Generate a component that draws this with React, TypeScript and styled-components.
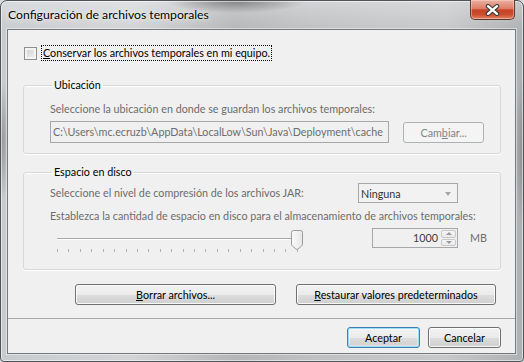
import React from "react";
import styled, { createGlobalStyle } from "styled-components";

const FONT = `Lato, "Noto Sans", "DejaVu Sans", sans-serif`;

const GlobalStyle = createGlobalStyle`
  html, body { margin: 0; padding: 0; background: #d9dbdd; }
  body { font-family: ${FONT}; font-size: 10.75px; }
  * { box-sizing: border-box; }
`;

const Window = styled.div`
  width: 524px;
  height: 362px;
  display: flex;
  flex-direction: column;
  padding: 0 7px 7px 6px;
  border: 1px solid #50545a;
  border-radius: 7px 7px 4px 4px;
  box-shadow: inset 0 0 0 1px rgba(255, 255, 255, 0.55);
  background:
    radial-gradient(ellipse 70px 12px at 235px 0px, rgba(70, 70, 70, 0.55), transparent),
    radial-gradient(ellipse 10px 60px at 0px 140px, rgba(90, 90, 90, 0.5), transparent),
    radial-gradient(ellipse 10px 80px at 524px 150px, rgba(90, 90, 90, 0.5), transparent),
    linear-gradient(180deg, rgba(255, 255, 255, 0.3), rgba(255, 255, 255, 0) 30px),
    linear-gradient(90deg, #c8cbce 0%, #d2d4d6 25%, #b4b6b8 45%, #bfc1c3 60%, #c6c8ca 85%, #aeb0b2 100%);
`;

const TitleBar = styled.div`
  height: 28px;
  display: flex;
  align-items: flex-start;
  justify-content: space-between;
`;

const Title = styled.div`
  margin: 6px 0 0 1px;
  font-size: 12.2px;
  line-height: 16px;
  color: #000;
  text-shadow: 0 0 6px rgba(255, 255, 255, 0.9), 0 0 2px rgba(255, 255, 255, 0.8);
`;

const CloseButton = styled.div`
  width: 45px;
  height: 20px;
  margin: -1px 1px 0 0;
  display: flex;
  align-items: center;
  justify-content: center;
  border: 1px solid #5c3a34;
  border-top: none;
  border-radius: 0 0 5px 5px;
  background: linear-gradient(#eab1a3 0%, #dd7d66 45%, #c84327 52%, #c94a2d 75%, #e58463 100%);
  box-shadow: inset 0 0 0 1px rgba(255, 220, 210, 0.45);
`;

const Client = styled.div`
  flex: 1;
  display: flex;
  flex-direction: column;
  background: #f0f0f0;
  border: 1px solid #75797d;
  box-shadow: 0 0 0 1px rgba(255, 255, 255, 0.45);
`;

const CheckRow = styled.div`
  margin: 15px 0 0 16px;
  height: 16px;
  display: flex;
  align-items: center;
  gap: 4px;
`;

const CheckBox = styled.span`
  width: 13px;
  height: 13px;
  border: 1px solid #8e8f8f;
  background: linear-gradient(135deg, #cfcfcf 0%, #f2f2f2 100%);
  box-shadow: inset 0 0 0 2px #f4f4f4;
`;

const FocusLabel = styled.span`
  border: 1px dotted #000;
  padding: 0 1px 0 1px;
  line-height: 14px;
  color: #000;
`;

const Group = styled.fieldset<{ $top: number; $pad: string }>`
  margin: ${(p) => p.$top}px 14px 0 15px;
  padding: ${(p) => p.$pad};
  border: 1px solid #d5d9dc;
  border-radius: 3px;
  box-shadow: 0 1px 0 #ffffff, inset 0 1px 0 #ffffff;
  min-width: 0;
`;

const Legend = styled.legend`
  margin-left: 2px;
  padding: 0 2px;
  line-height: 14px;
  color: #000;
`;

const Hint = styled.div<{ $top?: number }>`
  margin-top: ${(p) => p.$top ?? 0}px;
  line-height: 14px;
  color: #6d6d6d;
  white-space: nowrap;
`;

const FieldRow = styled.div`
  margin-top: 5px;
  display: flex;
  align-items: center;
  gap: 14px;
`;

const PathField = styled.div`
  width: 341px;
  height: 22px;
  padding: 0 2px;
  border: 1px solid #a5a7aa;
  background: #f0f0f0;
  color: #6d6d6d;
  line-height: 20px;
  white-space: nowrap;
  overflow: hidden;
`;

type Kind = "normal" | "default" | "disabled";

const Button = styled.div<{ $w: number; $kind?: Kind }>`
  width: ${(p) => p.$w}px;
  height: 21px;
  border: 1px solid
    ${(p) => (p.$kind === "default" ? "#3c7fb1" : p.$kind === "disabled" ? "#adb2b5" : "#707070")};
  border-radius: 3px;
  background: ${(p) =>
    p.$kind === "disabled"
      ? "#f4f4f4"
      : "linear-gradient(#f2f2f2 0%, #ebebeb 50%, #dddddd 51%, #cfcfcf 100%)"};
  box-shadow: ${(p) =>
    p.$kind === "default"
      ? "inset 0 0 0 1px #9ddcf6, inset 0 0 0 2px rgba(255,255,255,0.35)"
      : p.$kind === "disabled"
      ? "none"
      : "inset 0 0 0 1px rgba(255,255,255,0.85)"};
  color: ${(p) => (p.$kind === "disabled" ? "#838383" : "#000")};
  line-height: 19px;
  text-align: center;
  white-space: nowrap;
  u {
    text-underline-offset: 1px;
  }
`;

const OptionRow = styled.div`
  height: 20px;
  display: flex;
  align-items: center;
  justify-content: space-between;
  padding-right: 26px;
`;

const Combo = styled.div`
  width: 100px;
  height: 20px;
  display: flex;
  align-items: center;
  justify-content: space-between;
  padding: 0 6px 0 2px;
  border: 1px solid #a5a7aa;
  background: #f2f2f2;
  color: #333;
`;

const ComboArrow = styled.span`
  width: 0;
  height: 0;
  margin-top: 2px;
  border-left: 3.5px solid transparent;
  border-right: 3.5px solid transparent;
  border-top: 4px solid #a4a4a4;
`;

const SliderRow = styled.div`
  margin-top: 5px;
  display: flex;
  align-items: flex-start;
`;

const Slider = styled.div`
  position: relative;
  width: 250px;
  height: 25px;
  margin-left: 2px;
`;

const Track = styled.div`
  position: absolute;
  left: 5px;
  top: 10px;
  width: 240px;
  height: 2px;
  border-top: 1px solid #a9a9a9;
  border-bottom: 1px solid #fdfdfd;
`;

const ThumbBox = styled.div`
  position: absolute;
  left: 239px;
  top: 2px;
  width: 12px;
  height: 20px;
`;

const Ticks = styled.div`
  position: absolute;
  left: 5px;
  top: 21px;
  width: 241px;
  height: 3px;
  display: flex;
  justify-content: space-between;
`;

const Tick = styled.span`
  width: 1px;
  height: 3px;
  background: #b2b2b2;
`;

const Spinner = styled.div`
  margin-left: auto;
  width: 86px;
  height: 20px;
  display: flex;
  border: 1px solid #a5a7aa;
  background: #f0f0f0;
`;

const SpinValue = styled.div`
  flex: 1;
  padding-right: 3px;
  text-align: right;
  line-height: 18px;
  color: #3c3c3c;
`;

const SpinButtons = styled.div`
  width: 15px;
  margin: 1px 1px 1px 0;
  display: flex;
  flex-direction: column;
  gap: 1px;
`;

const SpinButton = styled.div`
  flex: 1;
  display: flex;
  align-items: center;
  justify-content: center;
  border: 1px solid #c8c9cb;
  border-radius: 2px;
  background: linear-gradient(#f6f6f6, #e9e9e9);
`;

const SpinArrow = styled.span<{ $up?: boolean }>`
  width: 0;
  height: 0;
  border-left: 3px solid transparent;
  border-right: 3px solid transparent;
  ${(p) => (p.$up ? "border-bottom: 3px solid #9a9a9a;" : "border-top: 3px solid #9a9a9a;")}
`;

const Unit = styled.div`
  width: 26px;
  padding-left: 12px;
  line-height: 20px;
  color: #6d6d6d;
`;

const ActionRow = styled.div`
  margin-top: 14px;
  padding-right: 19px;
  display: flex;
  justify-content: flex-end;
  gap: 20px;
`;

const Separator = styled.div`
  margin-top: auto;
  height: 1px;
  background: #a9a9a9;
`;

const Footer = styled.div`
  padding: 8px 14px 5px 0;
  display: flex;
  justify-content: flex-end;
  gap: 8px;
`;

const PATH = "C:\\Users\\mc.ecruzb\\AppData\\LocalLow\\Sun\\Java\\Deployment\\cache";

export default function App() {
  return (
    <>
      <GlobalStyle />
      <Window>
        <TitleBar>
          <Title>Configuración de archivos temporales</Title>
          <CloseButton>
            <svg width="15" height="12" viewBox="0 0 15 12">
              <path d="M3 2.2 L12 9.8 M12 2.2 L3 9.8" stroke="#3a3a3a" strokeWidth="4.4" strokeLinecap="round" />
              <path d="M3 2.2 L12 9.8 M12 2.2 L3 9.8" stroke="#ffffff" strokeWidth="2.4" strokeLinecap="round" />
            </svg>
          </CloseButton>
        </TitleBar>
        <Client>
          <CheckRow>
            <CheckBox />
            <FocusLabel>
              <u>C</u>onservar los archivos temporales en mi equipo.
            </FocusLabel>
          </CheckRow>

          <Group $top={17} $pad="10px 16px 10px 26px">
            <Legend>Ubicación</Legend>
            <Hint>Seleccione la ubicación en donde se guardan los archivos temporales:</Hint>
            <FieldRow>
              <PathField>{PATH}</PathField>
              <Button $w={81} $kind="disabled">
                Cam<u>b</u>iar...
              </Button>
            </FieldRow>
          </Group>

          <Group $top={11} $pad="4px 16px 16px 26px">
            <Legend>Espacio en disco</Legend>
            <OptionRow>
              <Hint>Seleccione el nivel de compresión de los archivos JAR:</Hint>
              <Combo>
                <span>Ninguna</span>
                <ComboArrow />
              </Combo>
            </OptionRow>
            <Hint $top={6}>
              Establezca la cantidad de espacio en disco para el almacenamiento de archivos temporales:
            </Hint>
            <SliderRow>
              <Slider>
                <Track />
                <Ticks>
                  {Array.from({ length: 22 }, (_, i) => (
                    <Tick key={i} />
                  ))}
                </Ticks>
                <ThumbBox>
                  <svg width="12" height="20" viewBox="0 0 12 20">
                    <defs>
                      <linearGradient id="thumbFill" x1="0" y1="0" x2="1" y2="0">
                        <stop offset="0" stopColor="#fbfbfb" />
                        <stop offset="1" stopColor="#e6e6e6" />
                      </linearGradient>
                    </defs>
                    <path
                      d="M0.5 2.5 Q0.5 0.5 2.5 0.5 H9.5 Q11.5 0.5 11.5 2.5 V14.2 Q11.5 15.2 10.6 16 L7.1 19 Q6 19.8 4.9 19 L1.4 16 Q0.5 15.2 0.5 14.2 Z"
                      fill="url(#thumbFill)"
                      stroke="#9c9c9c"
                    />
                  </svg>
                </ThumbBox>
              </Slider>
              <Spinner>
                <SpinValue>1000</SpinValue>
                <SpinButtons>
                  <SpinButton>
                    <SpinArrow $up />
                  </SpinButton>
                  <SpinButton>
                    <SpinArrow />
                  </SpinButton>
                </SpinButtons>
              </Spinner>
              <Unit>MB</Unit>
            </SliderRow>
          </Group>

          <ActionRow>
            <Button $w={201}>
              <u>B</u>orrar archivos...
            </Button>
            <Button $w={200}>
              <u>R</u>estaurar valores predeterminados
            </Button>
          </ActionRow>

          <Separator />
          <Footer>
            <Button $w={73} $kind="default">
              Aceptar
            </Button>
            <Button $w={73}>Cancelar</Button>
          </Footer>
        </Client>
      </Window>
    </>
  );
}
